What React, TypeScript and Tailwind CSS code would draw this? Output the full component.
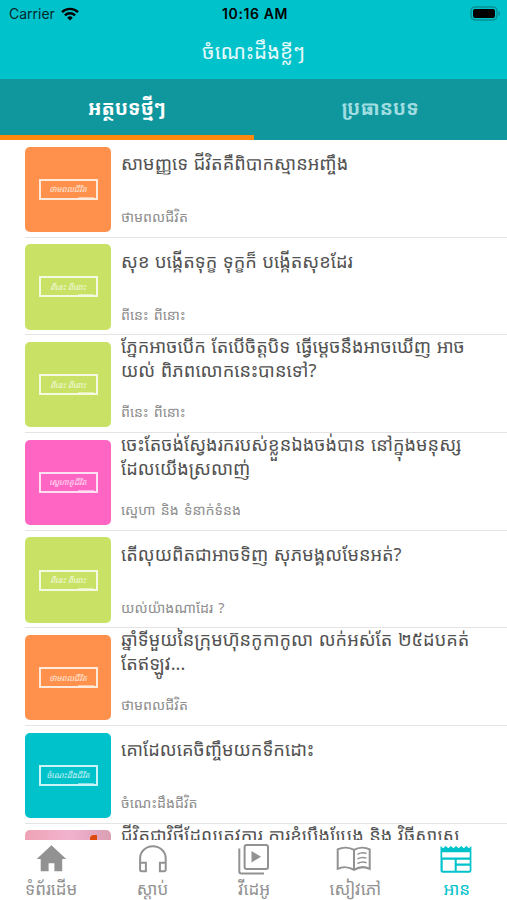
import type { ReactNode } from "react";

interface Article {
  lines: string[];
  category: string;
  badge: string;
  color: string;
}

const articles: Article[] = [
  {
    lines: ["សាមញ្ញទេ ជីវិតគឺពិបាកស្មានអញ្ចឹង"],
    category: "ថាមពលជីវិត",
    badge: "ថាមពលជីវិត",
    color: "bg-[#ff914d]",
  },
  {
    lines: ["សុខ បង្កើតទុក្ខ ទុក្ខក៏ បង្កើតសុខដែរ"],
    category: "ពីនេះ ពីនោះ",
    badge: "ពីនេះ ពីនោះ",
    color: "bg-[#c9e265]",
  },
  {
    lines: ["ភ្នែកអាចបើក តែបើចិត្តបិទ ធ្វើម្ដេចនឹងអាចឃើញ អាច", "យល់ ពិភពលោកនេះបានទៅ?"],
    category: "ពីនេះ ពីនោះ",
    badge: "ពីនេះ ពីនោះ",
    color: "bg-[#c9e265]",
  },
  {
    lines: ["ចេះតែចង់ស្វែងរករបស់ខ្លួនឯងចង់បាន នៅក្នុងមនុស្ស", "ដែលយើងស្រលាញ់"],
    category: "ស្នេហា និង ទំនាក់ទំនង",
    badge: "ស្នេហាគូជីវិត",
    color: "bg-[#ff66c4]",
  },
  {
    lines: ["តើលុយពិតជាអាចទិញ សុភមង្គលមែនអត់?"],
    category: "យល់យ៉ាងណាដែរ ?",
    badge: "ពីនេះ ពីនោះ",
    color: "bg-[#c9e265]",
  },
  {
    lines: ["ឆ្នាំទីមួយនៃក្រុមហ៊ុនកូកាកូលា លក់អស់តែ ២៥ដបគត់", "តែឥឡូវ..."],
    category: "ថាមពលជីវិត",
    badge: "ថាមពលជីវិត",
    color: "bg-[#ff914d]",
  },
  {
    lines: ["គោដែលគេចិញ្ចឹមយកទឹកដោះ"],
    category: "ចំណេះដឹងជីវិត",
    badge: "ចំណេះដឹងជីវិត",
    color: "bg-[#00c2cb]",
  },
];

// Tab icons, all on a 37x37 grid
const HomeIcon = (
  <path
    d="M16.600 31.300v-8h5.800v8h7.800V19h4L19.400 5.300 4.700 19h4v12.300Z"
    fill="currentColor"
    stroke="none"
  />
);

const HeadphonesIcon = (
  <path d="M6.100 22.800V18.400a12.800 12.100 0 0 1 25.600 0v4.400M6.100 22.800h5.800v8.500H7.600a1.500 1.500 0 0 1-1.500-1.500ZM31.700 22.800h-5.800v8.500h4.300a1.500 1.500 0 0 0 1.500-1.500Z" />
);

const VideoIcon = (
  <>
    <rect x="9.600" y="5" width="23.400" height="24" rx="2" />
    <path d="M4.300 8.500V31.500a2 2 0 0 0 2 2H29" />
    <path d="M16.500 11v11.400l9.500-5.700Z" fill="currentColor" stroke="none" />
  </>
);

const BookIcon = (
  <>
    <path d="M1.700 9.300C6.500 7 13.200 7 18 9.800 22.800 7 29.200 7 33.700 9.300V28.800C29.200 26.600 22.800 26.900 18 29.800 13.200 26.900 6.500 26.600 1.700 28.800ZM18 9.800v20" />
    <path d="M21.500 14.300c3-1.600 6.200-1.800 9-.8M21.500 18.900c3-1.600 6.200-1.800 9-.8M21.500 23.500c3-1.600 6.200-1.800 9-.8" strokeWidth="1.500" />
  </>
);

const NewsIcon = (
  <path
    fillRule="evenodd"
    fill="currentColor"
    stroke="none"
    d="M2.500 6l2.600 2.200L7.700 6l2.600 2.200L12.900 6l2.600 2.200L18 6l2.600 2.200L23.200 6l2.600 2.200L28.400 6l2.600 2.200L33.400 6v24.200a2.500 2.500 0 0 1-2.500 2.500H5a2.500 2.500 0 0 1-2.500-2.500ZM4.200 12.300v5.200h27.500v-5.200ZM4.700 19.800v11h12v-11ZM18.700 19.800v3.600h13v-3.600ZM18.700 25.700v5.100h13v-5.100Z"
  />
);

const navItems: { label: string; icon: ReactNode; active?: boolean }[] = [
  { label: "ទំព័រដើម", icon: HomeIcon },
  { label: "ស្ដាប់", icon: HeadphonesIcon },
  { label: "វីដេអូ", icon: VideoIcon },
  { label: "សៀវភៅ", icon: BookIcon },
  { label: "អាន", icon: NewsIcon, active: true },
];

function StatusBar() {
  return (
    <div className="grid h-[27px] grid-cols-3 items-center pl-[9px] pr-[6px] font-['Inter','Liberation_Sans',sans-serif] text-[14px] text-[#04282b]">
      <div className="flex items-center gap-[6px]">
        <span>Carrier</span>
        <svg width="18" height="14" viewBox="0 0 18 14" fill="none" stroke="#000" strokeWidth="2.4">
          <path d="M1 5.2a11.4 11.4 0 0 1 16 0" />
          <path d="M3.9 8.4a7.2 7.2 0 0 1 10.2 0" />
          <path d="M9 13.6 6.2 10.7a4 4 0 0 1 5.6 0Z" fill="#000" stroke="none" />
        </svg>
      </div>
      <span className="text-center font-semibold tracking-[0.6px] text-black">10:16 AM</span>
      <div className="flex justify-end">
        <svg width="31" height="15" viewBox="0 0 31 15">
          <rect x="1" y="1" width="26" height="13" rx="4" fill="none" stroke="#0a8f95" strokeWidth="1.5" />
          <rect x="3" y="3" width="22" height="9" rx="2" fill="#000" />
          <path d="M28.5 5v5c1-.4 1.7-1.4 1.7-2.5S29.5 5.4 28.5 5Z" fill="#0a8f95" />
        </svg>
      </div>
    </div>
  );
}

function Thumbnail({ badge, color }: { badge: string; color: string }) {
  return (
    <div className={`mt-[6.500px] flex h-[85.500px] w-[86px] shrink-0 items-center justify-center rounded-[5px] ${color}`}>
      <div className="relative flex h-[21px] w-[59px] items-center justify-center border-2 border-white/80">
        <span className="whitespace-nowrap text-[8px] italic leading-none text-white/80">{badge}</span>
        <span className="absolute bottom-0 right-0.5 h-px w-4 bg-white/50" />
      </div>
    </div>
  );
}

function ArticleRow({ article }: { article: Article }) {
  return (
    <div className="ml-[25px] flex h-[97.700px] shrink-0 gap-[10px] border-b border-[#e4e4e4]">
      <Thumbnail badge={article.badge} color={article.color} />
      <div className="flex min-w-0 flex-1 flex-col">
        <div className="-mt-px flex h-[48px] flex-col justify-center text-[18.200px] leading-[24px] text-[#525252] [word-spacing:0.8px]">
          {article.lines.map((line) => (
            <span key={line} className="whitespace-nowrap">{line}</span>
          ))}
        </div>
        <span className="mt-[20px] whitespace-nowrap text-[14.200px] leading-[20px] text-[#8e8e8e] [word-spacing:1.500px]">
          {article.category}
        </span>
      </div>
    </div>
  );
}

export default function App() {
  return (
    <div className="flex h-[900px] w-[507px] flex-col overflow-hidden bg-white font-['Noto_Sans_Khmer','Noto_Sans',sans-serif]">
      <header className="h-[79px] shrink-0 bg-[#00c2cb]">
        <StatusBar />
        <h1 className="text-center text-[20.500px] leading-[49px] text-white/90">ចំណេះដឹងខ្លីៗ</h1>
      </header>

      <nav className="grid h-[61px] shrink-0 grid-cols-2 bg-[#10979e] text-center text-[19.500px] font-bold leading-[57px]">
        <div className="h-[61px] border-b-[5px] border-[#ff8a0f] text-white">អត្ថបទថ្មីៗ</div>
        <div className="h-[61px] text-[#9fdde0]">ប្រធានបទ</div>
      </nav>

      <main className="flex h-[700px] shrink-0 flex-col overflow-hidden">
        {articles.map((article, i) => (
          <ArticleRow key={i} article={article} />
        ))}
        <div className="ml-[25px] flex shrink-0 gap-[10px]">
          <div className="relative mt-[6.500px] h-[85.500px] w-[86px] shrink-0 rounded-[5px] bg-linear-to-r from-[#eda3b4] via-[#f2b3cf] to-[#dba0b4]">
            <span className="absolute left-[65px] top-[5px] h-8 w-[7px] rounded-tl bg-[#dc4a0c]" />
          </div>
          <span className="-mt-px whitespace-nowrap text-[18.200px] leading-[24px] text-[#525252] [word-spacing:0.8px]">
            ជីវិតជាវិថីដែលត្រូវការ ការខំប្រឹងប្រែង និង វិធីសាស្រ្ត
          </span>
        </div>
      </main>

      <footer className="grid h-[60px] shrink-0 grid-cols-5 bg-white">
        {navItems.map(({ label, icon, active }) => (
          <div
            key={label}
            className={`flex flex-col items-center ${active ? "text-[#00c2cb]" : "text-[#929292]"}`}
          >
            <svg width="37" height="37" viewBox="0 0 37 37" fill="none" stroke="currentColor" strokeWidth="2">
              {icon}
            </svg>
            <span className="whitespace-nowrap pl-px text-[17px] leading-[24px]">{label}</span>
          </div>
        ))}
      </footer>
    </div>
  );
}
